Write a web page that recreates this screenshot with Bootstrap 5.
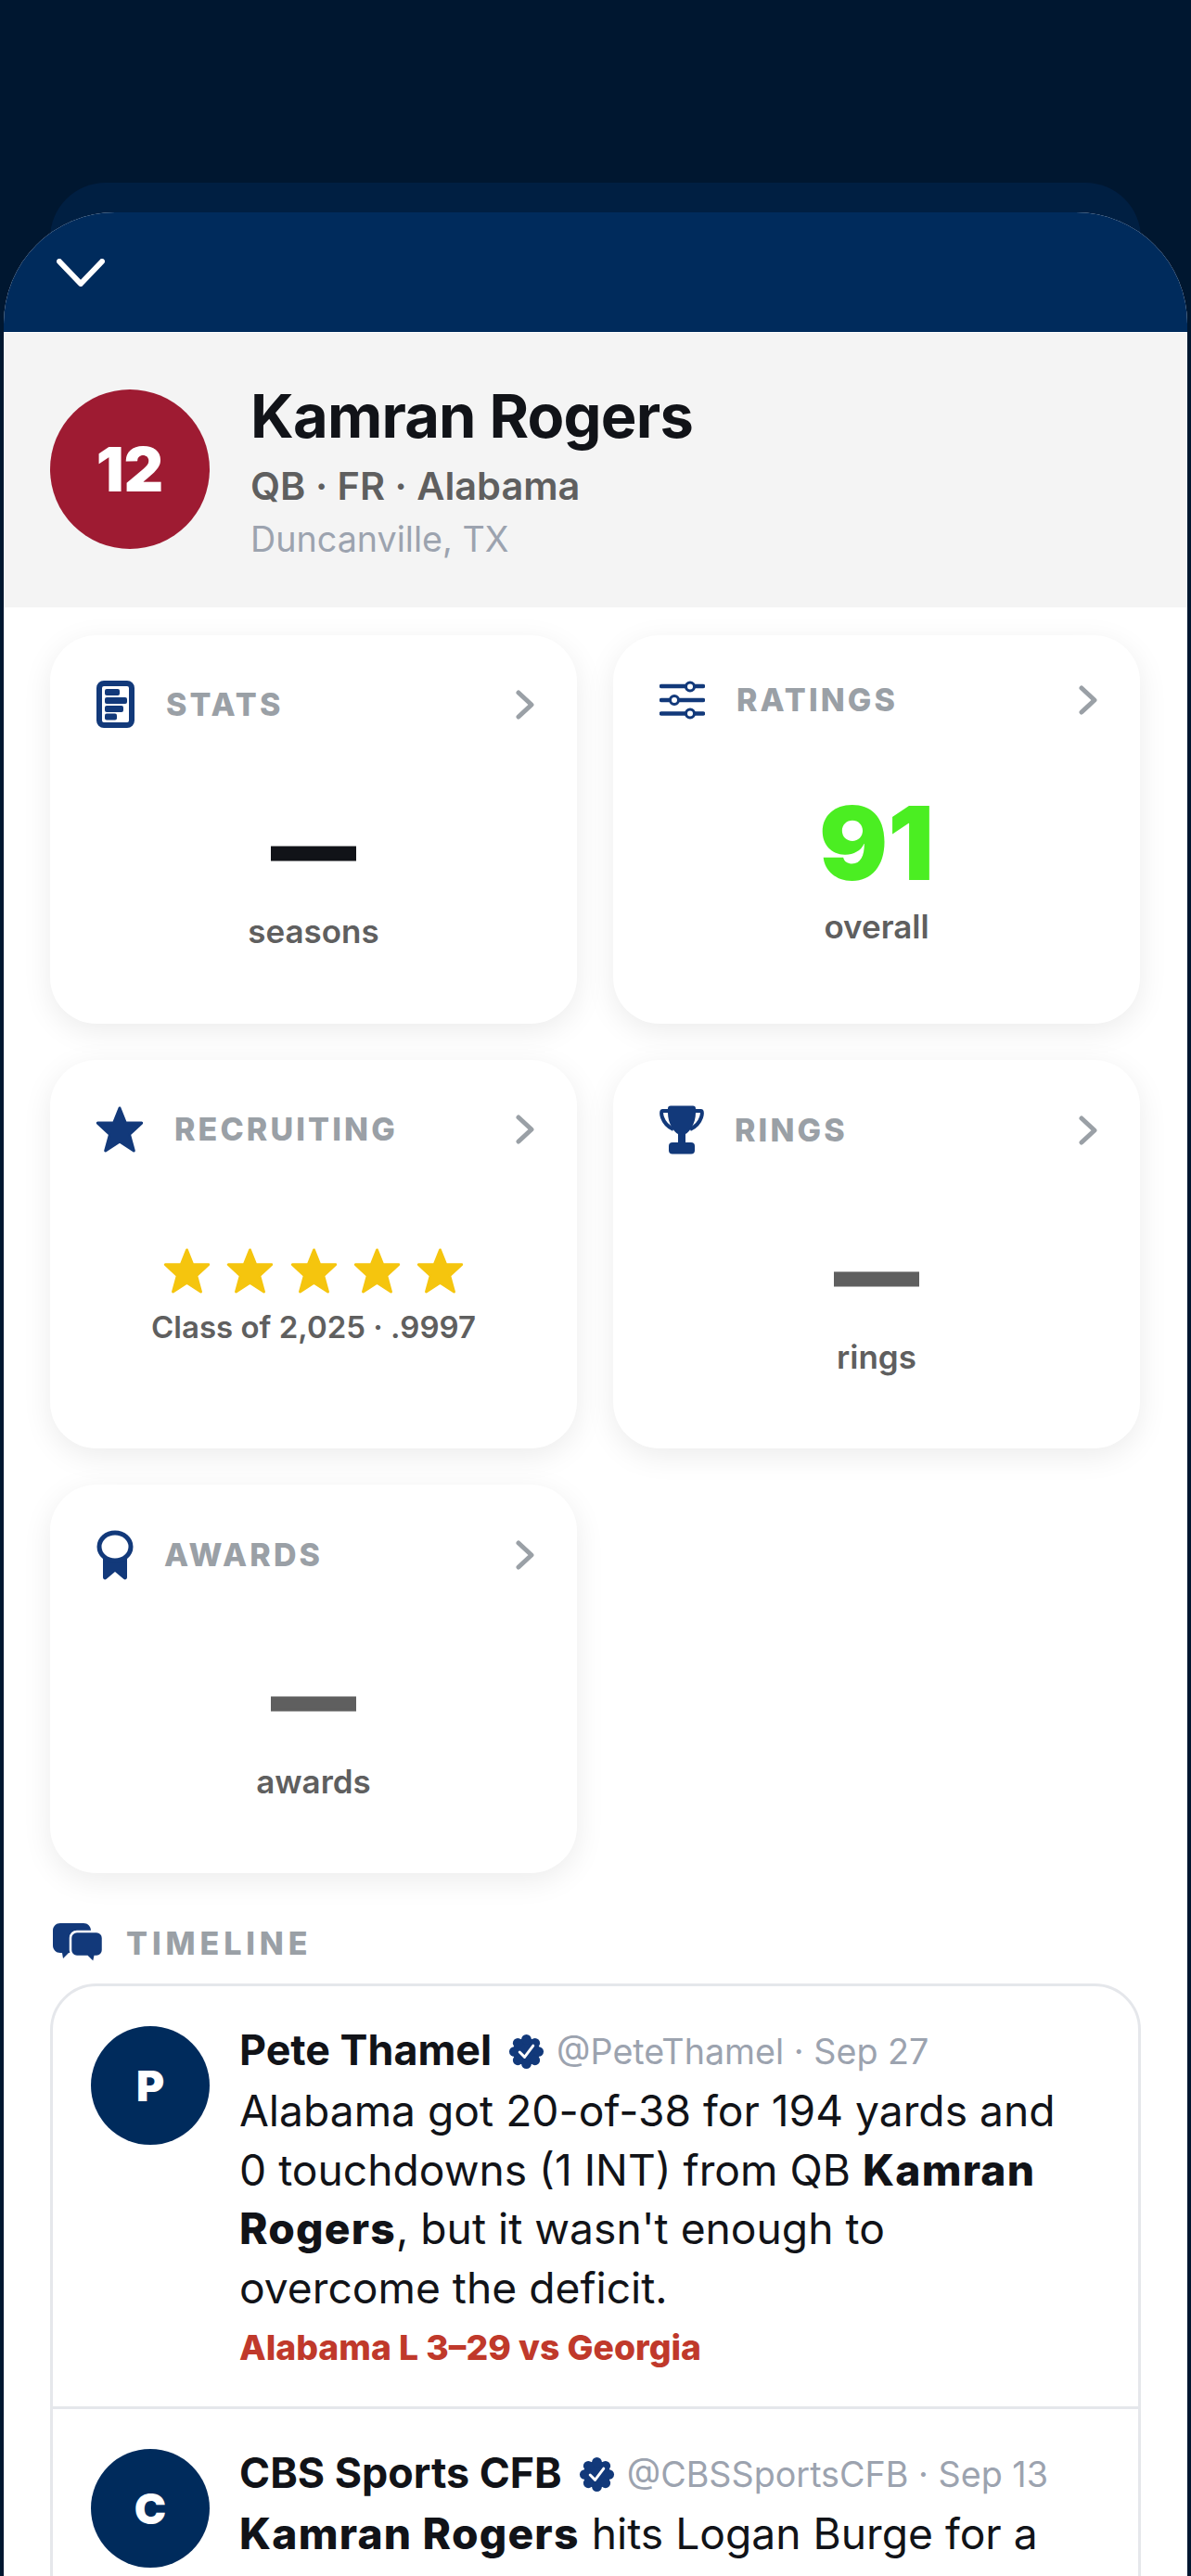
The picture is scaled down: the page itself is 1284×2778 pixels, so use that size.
<!DOCTYPE html>
<html lang="en">
<head>
    <meta charset="UTF-8">
    <meta name="viewport" content="width=device-width, initial-scale=1.0">
    <title>Kamran Rogers</title>
    <link href="https://cdn.jsdelivr.net/npm/bootstrap@5.3.0/dist/css/bootstrap.min.css" rel="stylesheet">
    <style>
        html, body {
            height: 2778px;
            overflow: hidden;
        }
        body {
            background-color: #001730;
            font-family: Inter, "Liberation Sans", sans-serif;
            color: #111318;
            padding: 197px 4px 0;
        }
        .back-sheet {
            height: 60px;
            margin: 0 50px -28px;
            background-color: #001f42;
            border-radius: 120px 120px 0 0;
        }
        .front-sheet {
            position: relative;
            background-color: #fff;
            border-radius: 120px 120px 0 0;
            overflow: hidden;
        }
        .sheet-head {
            height: 129px;
            background-color: #002b5c;
            padding: 50px 0 0 57px;
            margin-bottom: 1px;
        }
        .player-band {
            height: 296px;
            background-color: #f4f4f4;
            padding: 61px 0 0 50px;
            gap: 44px;
        }
        .jersey {
            width: 172px;
            height: 172px;
            background-color: #9e1b32;
            color: #fff;
            font-size: 66px;
            font-weight: 900;
            flex-shrink: 0;
        }
        .player-name {
            font-size: 65px;
            font-weight: 700;
            line-height: 78px;
            letter-spacing: -.8px;
            margin: -10px 0 0;
        }
        .player-meta {
            font-size: 41.500px;
            font-weight: 600;
            line-height: 48px;
            color: #5f5f5f;
            margin-top: 12px;
        }
        .player-home {
            font-size: 37.700px;
            line-height: 44px;
            color: #9ca3af;
            margin-top: 11px;
        }
        .tiles {
            padding: 30px 51px 0 50px;
        }
        .tiles .row {
            --bs-gutter-x: 39px;
            --bs-gutter-y: 39px;
        }
        .tile {
            height: 419px;
            background-color: #fff;
            border-radius: 50px;
            box-shadow: 0 8px 32px rgba(0, 0, 0, .08);
            padding: 49px 46px 4px 50px;
        }
        .tile-main {
            margin-left: -4px;
        }
        .tile-label {
            font-size: 34px;
            font-weight: 800;
            letter-spacing: 3.100px;
            color: #9aa0a6;
            line-height: 1;
        }
        .tile-value {
            font-size: 110px;
            font-weight: 900;
            line-height: 106px;
        }
        .tile-dash {
            font-size: 89px;
            font-weight: 900;
            line-height: 106px;
            -webkit-text-stroke: 3px currentColor;
        }
        .tile-caption {
            font-size: 35px;
            font-weight: 600;
            line-height: 42px;
            color: #5f5f5f;
            margin-top: 16px;
        }
        .tone-muted { color: #5f5f5f; }
        .tone-green { color: #4bee22; }
        .star-row { gap: 15.400px; }
        .recruit-line {
            font-size: 33px;
            font-weight: 600;
            line-height: 40px;
            color: #5f5f5f;
            margin-top: 15px;
        }
        .recruit-main { margin-bottom: 7px; }
        .timeline-head {
            margin: 54px 0 22px 3px;
            gap: 23px;
        }
        .timeline-head .tile-label { letter-spacing: 4.900px; }
        .feed {
            border: 3px solid #e5e7eb;
            border-radius: 50px;
            height: 900px;
            margin-right: -1px;
        }
        .tweet {
            padding: 43px 41px 0;
            gap: 32px;
        }
        .tweet + .tweet {
            border-top: 3px solid #e5e7eb;
        }
        .tweet-avatar {
            width: 128px;
            height: 128px;
            background-color: #002b5c;
            color: #fff;
            font-size: 46px;
            font-weight: 900;
            flex-shrink: 0;
        }
        .tweet-text { width: 890px; }
        .tweet-top {
            white-space: nowrap;
            gap: 18px;
            height: 48px;
            margin-top: 3px;
        }
        .tweet-name {
            font-size: 44.800px;
            font-weight: 700;
        }
        .tweet-handle {
            font-size: 37.700px;
            color: #9ca3af;
            margin-left: -5px;
        }
        .tweet-body {
            font-size: 46.200px;
            line-height: 63.500px;
            margin: 9px 0 0;
        }
        .tweet-body b {
            font-weight: 800;
            letter-spacing: 1.200px;
        }
        .tweet-game {
            font-size: 37.300px;
            font-weight: 800;
            color: #c0392b;
            line-height: 44px;
            margin: 11px 0 41px;
        }
    </style>
</head>
<body>
    <svg width="0" height="0" class="d-block">
        <symbol id="star" viewBox="0 0 54 52">
            <path fill="currentColor" stroke="currentColor" stroke-width="3" stroke-linejoin="round" d="M27 3L33.400 19.100H50.700L37.500 31.400L42.300 49L27 39L11.700 49L16.500 31.400L3.300 19.100H20.600Z"/>
        </symbol>
        <symbol id="badge" viewBox="0 0 40 40">
            <g fill="#12397a">
                <circle cx="20" cy="20" r="15"/>
                <circle cx="33.500" cy="20" r="5.500"/><circle cx="29.500" cy="29.500" r="5.500"/>
                <circle cx="20" cy="33.500" r="5.500"/><circle cx="10.500" cy="29.500" r="5.500"/>
                <circle cx="6.500" cy="20" r="5.500"/><circle cx="10.500" cy="10.500" r="5.500"/>
                <circle cx="20" cy="6.500" r="5.500"/><circle cx="29.500" cy="10.500" r="5.500"/>
            </g>
            <path d="M12.500 20.500L18 26L27.500 13.500" fill="none" stroke="#fff" stroke-width="3" stroke-linecap="round" stroke-linejoin="round"/>
        </symbol>
        <symbol id="chev" viewBox="0 0 20 32">
            <path d="M3 3L17 16L3 29" fill="none" stroke="#9aa0a6" stroke-width="5" stroke-linecap="round" stroke-linejoin="round"/>
        </symbol>
    </svg>

    <div class="back-sheet"></div>
    <div class="front-sheet">
        <div class="sheet-head">
            <svg width="52" height="30" viewBox="0 0 52 30"><path d="M3 3L26 27L49 3" fill="none" stroke="#fff" stroke-width="6" stroke-linecap="round" stroke-linejoin="round"/></svg>
        </div>

        <div class="player-band d-flex">
            <div class="jersey rounded-circle d-flex align-items-center justify-content-center">12</div>
            <div>
                <h1 class="player-name">Kamran Rogers</h1>
                <div class="player-meta">QB · FR · Alabama</div>
                <div class="player-home">Duncanville, TX</div>
            </div>
        </div>

        <div class="tiles">
            <div class="row">
                <div class="col-6">
                    <div class="tile d-flex flex-column">
                        <div class="d-flex align-items-center">
                            <svg width="41" height="51" viewBox="0 0 41 51">
                                <rect x="3" y="3" width="35" height="45" rx="5" fill="none" stroke="#12397a" stroke-width="6"/>
                                <g fill="#12397a">
                                    <rect x="9" y="9" width="16" height="7" rx="2"/><rect x="9" y="18" width="24" height="7" rx="2"/>
                                    <rect x="9" y="27" width="20" height="7" rx="2"/><rect x="9" y="35.500" width="13" height="7" rx="2"/>
                                </g>
                            </svg>
                            <span class="tile-label flex-grow-1" style="margin-left:34px">STATS</span>
                            <svg width="20" height="32"><use href="#chev"/></svg>
                        </div>
                        <div class="tile-main flex-grow-1 d-flex flex-column align-items-center justify-content-center">
                            <div class="tile-dash">—</div>
                            <div class="tile-caption">seasons</div>
                        </div>
                    </div>
                </div>
                <div class="col-6">
                    <div class="tile d-flex flex-column">
                        <div class="d-flex align-items-center">
                            <svg width="49" height="42" viewBox="0 0 49 42" fill="none" stroke="#12397a">
                                <path d="M2 6H47M2 21H47M2 35.500H47" stroke-width="4.500" stroke-linecap="round"/>
                                <g fill="#fff" stroke-width="3">
                                    <circle cx="33" cy="6.500" r="4.500"/><circle cx="16" cy="21" r="4.500"/><circle cx="33" cy="35.500" r="4.500"/>
                                </g>
                            </svg>
                            <span class="tile-label flex-grow-1" style="margin-left:34px">RATINGS</span>
                            <svg width="20" height="32"><use href="#chev"/></svg>
                        </div>
                        <div class="tile-main flex-grow-1 d-flex flex-column align-items-center justify-content-center">
                            <div class="tile-value tone-green">91</div>
                            <div class="tile-caption">overall</div>
                        </div>
                    </div>
                </div>
                <div class="col-6">
                    <div class="tile d-flex flex-column">
                        <div class="d-flex align-items-center">
                            <svg width="54" height="52" style="color:#12397a;margin-left:-2px"><use href="#star"/></svg>
                            <span class="tile-label flex-grow-1" style="margin-left:32px">RECRUITING</span>
                            <svg width="20" height="32"><use href="#chev"/></svg>
                        </div>
                        <div class="tile-main recruit-main flex-grow-1 d-flex flex-column align-items-center justify-content-center">
                            <div class="star-row d-flex" style="color:#f5c50e">
                                <svg width="53" height="51"><use href="#star"/></svg>
                                <svg width="53" height="51"><use href="#star"/></svg>
                                <svg width="53" height="51"><use href="#star"/></svg>
                                <svg width="53" height="51"><use href="#star"/></svg>
                                <svg width="53" height="51"><use href="#star"/></svg>
                            </div>
                            <div class="recruit-line">Class of 2,025 · .9997</div>
                        </div>
                    </div>
                </div>
                <div class="col-6">
                    <div class="tile d-flex flex-column">
                        <div class="d-flex align-items-center">
                            <svg width="48" height="53" viewBox="0 0 48 53">
                                <path fill="none" stroke="#12397a" stroke-width="4" d="M10 6H3.500C1.500 6 2 10 3 13C5 19 9 23 15 26M38 6H44.500C46.500 6 46 10 45 13C43 19 39 23 33 26"/>
                                <path fill="#12397a" d="M12 .5H36C38 .5 39 1.500 39 3.500V8C39 20 32 29 28 31V41H20V31C16 29 9 20 9 8V3.500C9 1.500 10 .5 12 .5Z"/>
                                <rect x="10" y="40" width="28" height="12.500" rx="4" fill="#12397a"/>
                            </svg>
                            <span class="tile-label flex-grow-1" style="margin-left:33px">RINGS</span>
                            <svg width="20" height="32"><use href="#chev"/></svg>
                        </div>
                        <div class="tile-main flex-grow-1 d-flex flex-column align-items-center justify-content-center">
                            <div class="tile-dash tone-muted">—</div>
                            <div class="tile-caption">rings</div>
                        </div>
                    </div>
                </div>
                <div class="col-6">
                    <div class="tile d-flex flex-column">
                        <div class="d-flex align-items-center">
                            <svg width="40" height="54" viewBox="0 0 40 54">
                                <path fill="#12397a" d="M7 28V51C7 53 9 54 10.500 53L20 45L29.500 53C31 54 33 53 33 51V28Z"/>
                                <ellipse cx="20" cy="18" rx="17" ry="15" fill="#fff" stroke="#12397a" stroke-width="5"/>
                            </svg>
                            <span class="tile-label flex-grow-1" style="margin-left:33px">AWARDS</span>
                            <svg width="20" height="32"><use href="#chev"/></svg>
                        </div>
                        <div class="tile-main flex-grow-1 d-flex flex-column align-items-center justify-content-center">
                            <div class="tile-dash tone-muted">—</div>
                            <div class="tile-caption">awards</div>
                        </div>
                    </div>
                </div>
            </div>

            <div class="timeline-head d-flex align-items-center">
                <svg width="56" height="43" viewBox="0 0 56 43">
                    <path fill="#12397a" d="M8 0H33C37.500 0 41 3.500 41 8V24C41 28.500 37.500 32 33 32H17L11 38L10 32H8C3.500 32 0 28.500 0 24V8C0 3.500 3.500 0 8 0Z"/>
                    <path fill="#12397a" stroke="#fff" stroke-width="2.500" d="M26 9H47C51 9 54 12 54 16V29C54 33 51 36 47 36H45.500L44 43L37 36H26C22 36 19 33 19 29V16C19 12 22 9 26 9Z"/>
                </svg>
                <span class="tile-label">TIMELINE</span>
            </div>

            <div class="feed">
                <div class="tweet d-flex">
                    <div class="tweet-avatar rounded-circle d-flex align-items-center justify-content-center">P</div>
                    <div class="tweet-text">
                        <div class="tweet-top d-flex align-items-center">
                            <span class="tweet-name">Pete Thamel</span>
                            <svg width="39" height="39"><use href="#badge"/></svg>
                            <span class="tweet-handle">@PeteThamel · Sep 27</span>
                        </div>
                        <p class="tweet-body">Alabama got 20-of-38 for 194 yards and 0 touchdowns (1 INT) from QB <b>Kamran</b> <b>Rogers</b>, but it wasn't enough to overcome the deficit.</p>
                        <div class="tweet-game">Alabama L 3–29 vs Georgia</div>
                    </div>
                </div>
                <div class="tweet d-flex">
                    <div class="tweet-avatar rounded-circle d-flex align-items-center justify-content-center">C</div>
                    <div class="tweet-text">
                        <div class="tweet-top d-flex align-items-center">
                            <span class="tweet-name">CBS Sports CFB</span>
                            <svg width="39" height="39"><use href="#badge"/></svg>
                            <span class="tweet-handle">@CBSSportsCFB · Sep 13</span>
                        </div>
                        <p class="tweet-body"><b>Kamran Rogers</b> hits Logan Burge for a</p>
                    </div>
                </div>
            </div>
        </div>
    </div>

    <script src="https://cdn.jsdelivr.net/npm/bootstrap@5.3.0/dist/js/bootstrap.bundle.min.js"></script>
</body>
</html>
